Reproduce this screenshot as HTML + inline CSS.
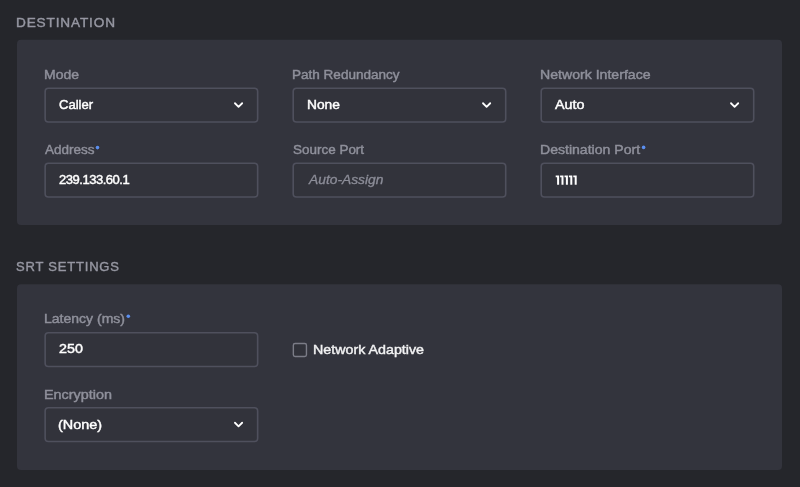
<!DOCTYPE html>
<html><head><meta charset="utf-8">
<style>
html,body{margin:0;padding:0;}
body{width:800px;height:487px;background:#25262b;font-family:"Liberation Sans",sans-serif;position:relative;overflow:hidden;}
#w{position:absolute;left:0;top:0;width:800px;height:487px;will-change:transform;filter:blur(.4px);}
#g{position:absolute;left:0;top:0;}
.h,.lb,.v{position:absolute;white-space:nowrap;line-height:16px;transform-origin:0 0;}
.h{font-size:13px;color:#9697a2;letter-spacing:.8px;-webkit-text-stroke:.42px #9697a2;}
.lb{font-size:12.2px;color:#8f909b;-webkit-text-stroke:.42px #8f909b;}
.v{font-size:12.2px;color:#fff;-webkit-text-stroke:.42px #fff;}
.ph{color:#8c8d98;font-style:italic;-webkit-text-stroke:.3px #8c8d98;}
.na{color:#f2f2f3;font-size:12.6px;-webkit-text-stroke:.42px #f2f2f3;}
</style></head><body><div id="w">
<svg id="g" width="800" height="487" viewBox="0 0 800 487">
<rect x="17" y="39.8" width="765" height="185.2" rx="4" fill="#33343d"/>
<rect x="17" y="284.2" width="765" height="185.8" rx="4" fill="#33343d"/>
<rect x="45.15" y="88.2" width="212.5" height="33.8" rx="3.3" fill="#32333b" stroke="#4f505d" stroke-width="1.6"/>
<rect x="293.2" y="88.2" width="212.5" height="33.8" rx="3.3" fill="#32333b" stroke="#4f505d" stroke-width="1.6"/>
<rect x="541.2" y="88.2" width="212.5" height="33.8" rx="3.3" fill="#32333b" stroke="#4f505d" stroke-width="1.6"/>
<rect x="45.15" y="163.2" width="212.5" height="33.8" rx="3.3" fill="#32333b" stroke="#4f505d" stroke-width="1.6"/>
<rect x="293.2" y="163.2" width="212.5" height="33.8" rx="3.3" fill="#32333b" stroke="#4f505d" stroke-width="1.6"/>
<rect x="541.2" y="163.2" width="212.5" height="33.8" rx="3.3" fill="#32333b" stroke="#4f505d" stroke-width="1.6"/>
<rect x="45.15" y="332.7" width="212.5" height="33.8" rx="3.3" fill="#32333b" stroke="#4f505d" stroke-width="1.6"/>
<rect x="45.15" y="407.7" width="212.5" height="33.8" rx="3.3" fill="#32333b" stroke="#4f505d" stroke-width="1.6"/>
<path d="M234.95 103.25 L238.55 106.85 L242.15 103.25" fill="none" stroke="#fff" stroke-width="1.8" stroke-linecap="round" stroke-linejoin="round"/>
<path d="M483.00 103.25 L486.60 106.85 L490.20 103.25" fill="none" stroke="#fff" stroke-width="1.8" stroke-linecap="round" stroke-linejoin="round"/>
<path d="M731.00 103.25 L734.60 106.85 L738.20 103.25" fill="none" stroke="#fff" stroke-width="1.8" stroke-linecap="round" stroke-linejoin="round"/>
<path d="M234.95 422.75 L238.55 426.35 L242.15 422.75" fill="none" stroke="#fff" stroke-width="1.8" stroke-linecap="round" stroke-linejoin="round"/>
<circle cx="97.5" cy="147.6" r="1.8" fill="#5b8ff0"/>
<circle cx="643.6" cy="147.4" r="1.8" fill="#5b8ff0"/>
<circle cx="128.3" cy="316.3" r="1.8" fill="#5b8ff0"/>
<rect x="293.35" y="343.55" width="13.1" height="13" rx="1.7" fill="#31323a" stroke="#7b7c87" stroke-width="1.4"/>
<path d="M555.70 175.5 h3.4 v9.2 h-2.0 v-7.5 h-1.4 z" fill="#fff"/>
<path d="M560.10 175.5 h3.4 v9.2 h-2.0 v-7.5 h-1.4 z" fill="#fff"/>
<path d="M564.50 175.5 h3.4 v9.2 h-2.0 v-7.5 h-1.4 z" fill="#fff"/>
<path d="M568.90 175.5 h3.4 v9.2 h-2.0 v-7.5 h-1.4 z" fill="#fff"/>
<path d="M573.30 175.5 h3.4 v9.2 h-2.0 v-7.5 h-1.4 z" fill="#fff"/>
</svg>
<div id="h1" class="h" style="left:16.02px;top:15px;transform:scaleX(1.0482)">DESTINATION</div>
<div id="h2" class="h" style="left:16.07px;top:259px;transform:scaleX(0.9999)">SRT SETTINGS</div>
<div id="l1" class="lb" style="left:43.65px;top:67px;transform:scaleX(1.1484)">Mode</div>
<div id="l2" class="lb" style="left:292.01px;top:67px;transform:scaleX(1.1104)">Path Redundancy</div>
<div id="l3" class="lb" style="left:539.94px;top:67px;transform:scaleX(1.1574)">Network Interface</div>
<div id="l4" class="lb" style="left:44.61px;top:142px;transform:scaleX(1.1083)">Address</div>
<div id="l5" class="lb" style="left:293.36px;top:142px;transform:scaleX(1.1047)">Source Port</div>
<div id="l6" class="lb" style="left:539.94px;top:142px;transform:scaleX(1.1542)">Destination Port</div>
<div id="l7" class="lb" style="left:43.95px;top:311px;transform:scaleX(1.1502)">Latency (ms)</div>
<div id="l8" class="lb" style="left:43.74px;top:387px;transform:scaleX(1.1805)">Encryption</div>
<div id="v1" class="v" style="left:59.22px;top:97px;transform:scaleX(1.0725)">Caller</div>
<div id="v2" class="v" style="left:307.20px;top:97px;transform:scaleX(1.1299)">None</div>
<div id="v3" class="v" style="left:555.41px;top:97px;transform:scaleX(1.1783)">Auto</div>
<div id="v4" class="v" style="left:58.96px;top:172px;letter-spacing:-.45px;transform:scaleX(1.0685)">239.133.60.1</div>
<div id="v5" class="v ph" style="left:308.86px;top:172px;transform:scaleX(1.1327)">Auto-Assign</div>
<div id="v7" class="v" style="left:58.60px;top:341px;transform:scaleX(1.1719)">250</div>
<div id="v8" class="v" style="left:58.29px;top:417px;transform:scaleX(1.1812)">(None)</div>
<div id="v9" class="v na" style="left:313.01px;top:342px;transform:scaleX(1.1328)">Network Adaptive</div>
</div></body></html>
